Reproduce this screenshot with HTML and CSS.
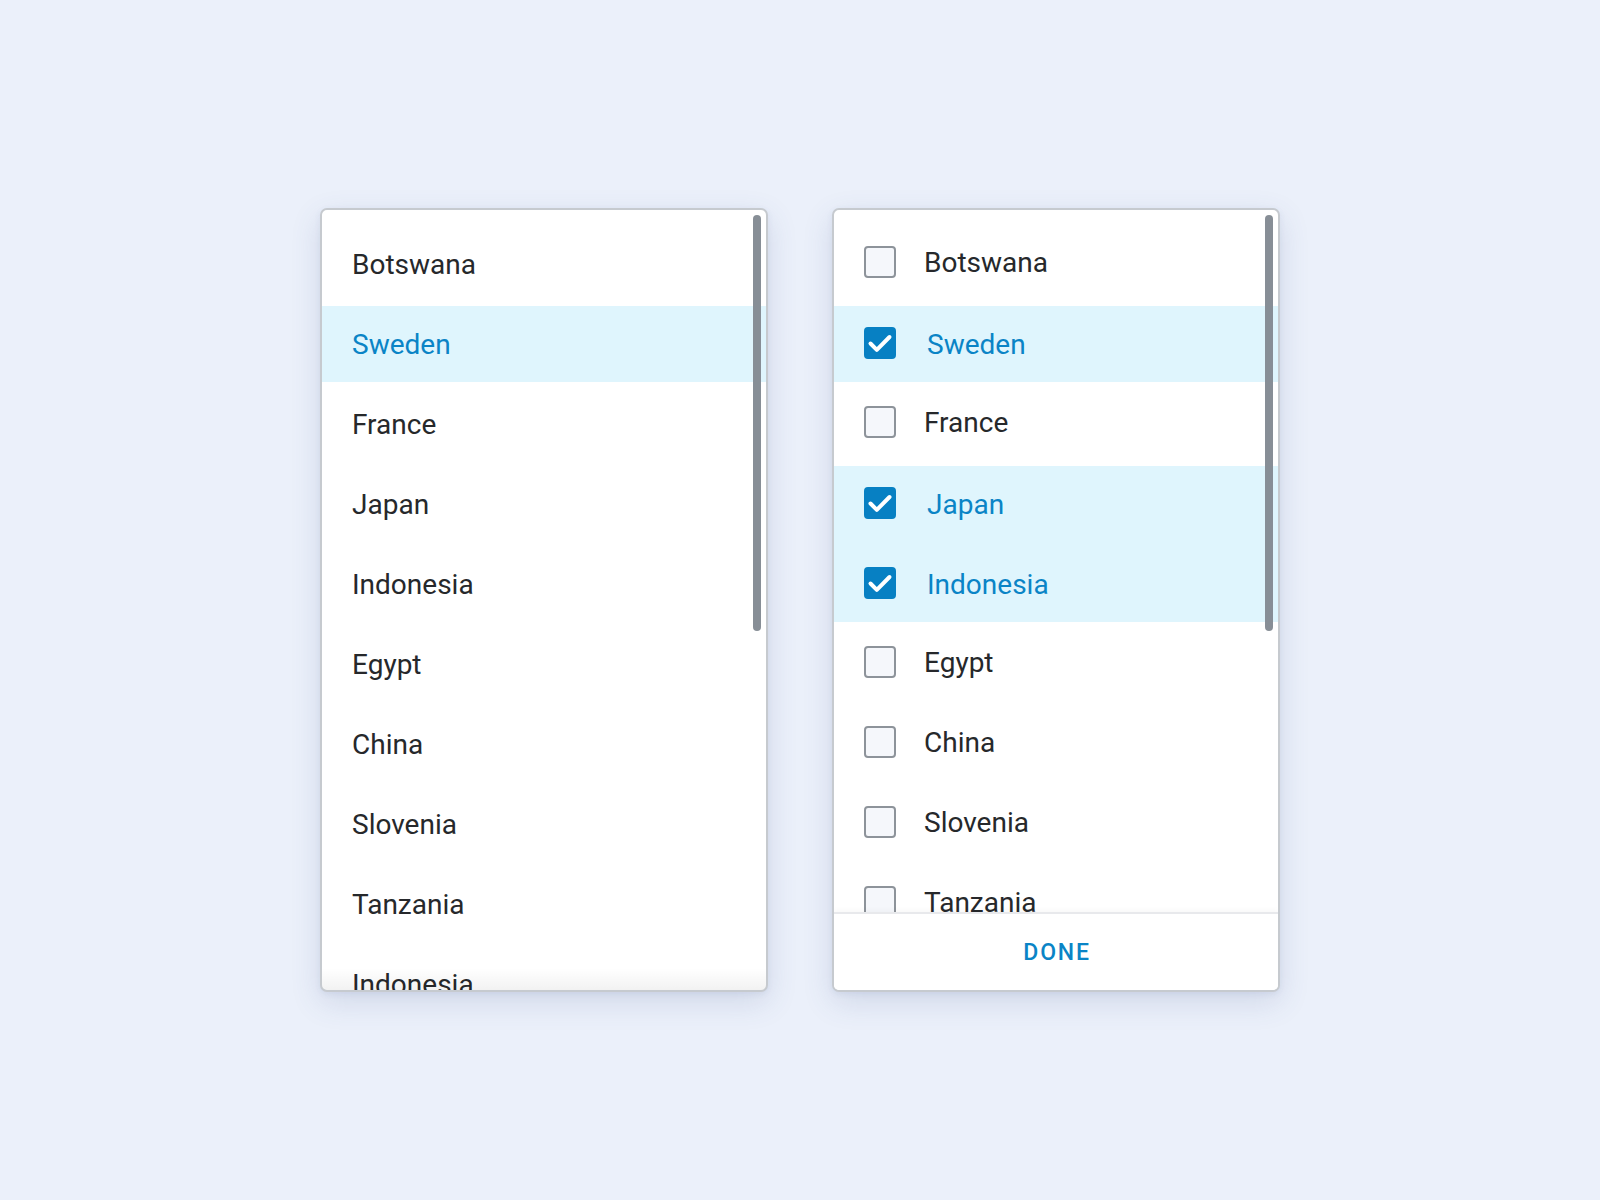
FILE: index.html
```html
<!DOCTYPE html>
<html lang="en">
<head>
  <meta charset="UTF-8" />
  <title>Country pickers</title>
  <link rel="stylesheet" href="styles.css">
</head>
<body>

  <div class="pickers">

    <div class="panel single">
      <ul class="list">
        <li class="row">Botswana</li>
        <li class="row selected">Sweden</li>
        <li class="row">France</li>
        <li class="row">Japan</li>
        <li class="row">Indonesia</li>
        <li class="row">Egypt</li>
        <li class="row">China</li>
        <li class="row">Slovenia</li>
        <li class="row">Tanzania</li>
        <li class="row">Indonesia</li>
      </ul>
      <div class="scrollbar"></div>
    </div>

    <div class="panel multi">
      <ul class="list">
        <li class="row"><span class="box"></span><span class="label">Botswana</span></li>
        <li class="row selected"><span class="box checked"><svg viewBox="0 0 32 32"><polyline points="6.5,16.5 12.8,22.8 25.5,10"/></svg></span><span class="label">Sweden</span></li>
        <li class="row"><span class="box"></span><span class="label">France</span></li>
        <li class="row selected"><span class="box checked"><svg viewBox="0 0 32 32"><polyline points="6.5,16.5 12.8,22.8 25.5,10"/></svg></span><span class="label">Japan</span></li>
        <li class="row selected"><span class="box checked"><svg viewBox="0 0 32 32"><polyline points="6.5,16.5 12.8,22.8 25.5,10"/></svg></span><span class="label">Indonesia</span></li>
        <li class="row"><span class="box"></span><span class="label">Egypt</span></li>
        <li class="row"><span class="box"></span><span class="label">China</span></li>
        <li class="row"><span class="box"></span><span class="label">Slovenia</span></li>
        <li class="row"><span class="box"></span><span class="label">Tanzania</span></li>
        <li class="row"><span class="box"></span><span class="label">Indonesia</span></li>
      </ul>
      <div class="footer">
        <a href="#" class="done">Done</a>
      </div>
      <div class="scrollbar"></div>
    </div>

  </div>

</body>
</html>
```

FILE: styles.css
```css
* {
  margin: 0; padding: 0; box-sizing: border-box;
}

html, body {
  height: 100%;
}

body {
  background: #ebf0fa;
  font-family: Roboto, 'Noto Sans', sans-serif;
  color: #26282b;
  display: flex;
  align-items: center;
  justify-content: center;
}

.pickers {
  display: flex;
  gap: 64px;
}

.panel {
  width: 448px;
  height: 784px;
  background: #fff;
  border: 2px solid #c6cacf;
  border-radius: 7px;
  box-shadow: 0 10px 30px rgba(70, 90, 140, 0.16), 0 2px 6px rgba(70, 90, 140, 0.08);
  position: relative;
  overflow: hidden;
  display: flex;
  flex-direction: column;
}

.single::after {
  content: "";
  position: absolute;
  left: 0; right: 0; bottom: 0;
  height: 22px;
  background: linear-gradient(rgba(0, 0, 0, 0), rgba(0, 0, 0, 0.05));
  pointer-events: none;
}

.list {
  list-style: none;
  flex: 1;
  overflow: hidden;
  padding-top: 16px;
  display: flex;
  flex-direction: column;
  gap: 4px;
}

.row {
  flex-shrink: 0;
  height: 76px;
  display: flex;
  align-items: center;
  padding-left: 30px;
  font-size: 28px;
}

.row.selected {
  background: #dff5fd;
  color: #0a84c6;
}

.row.selected + .row.selected {
  box-shadow: 0 -4px 0 #dff5fd;
}

.multi .row {
  margin-top: -2px;
  margin-bottom: 2px;
}

.multi .row.selected {
  margin-top: 0;
  margin-bottom: 0;
}

.multi .row.selected .box {
  margin-top: -2px;
}

.box {
  width: 32px;
  height: 32px;
  border: 2px solid #8d939a;
  border-radius: 4px;
  background: #f5f7fb;
  margin-right: 28px;
  flex-shrink: 0;
}

.box.checked {
  background: #0780c3;
  border-color: #0780c3;
  margin-right: 31px;
}

.box svg {
  display: block;
  width: 32px;
  height: 32px;
  margin: -2px;
}

.box polyline {
  fill: none;
  stroke: #fff;
  stroke-width: 4;
  stroke-linecap: round;
  stroke-linejoin: round;
}

.footer {
  height: 78px;
  flex-shrink: 0;
  border-top: 2px solid #e8e9ec;
  box-shadow: 0 -2px 5px rgba(0, 0, 0, 0.03);
  background: #fff;
  display: flex;
  align-items: center;
  justify-content: center;
  position: relative;
}

.done {
  color: #0a84c6;
  font-size: 23px;
  font-weight: 500;
  letter-spacing: 1.8px;
  text-transform: uppercase;
  text-decoration: none;
  margin-left: 2px;
}

.scrollbar {
  position: absolute;
  top: 5px;
  right: 5px;
  width: 8px;
  height: 416px;
  border-radius: 4px;
  background: #878e96;
}
```
